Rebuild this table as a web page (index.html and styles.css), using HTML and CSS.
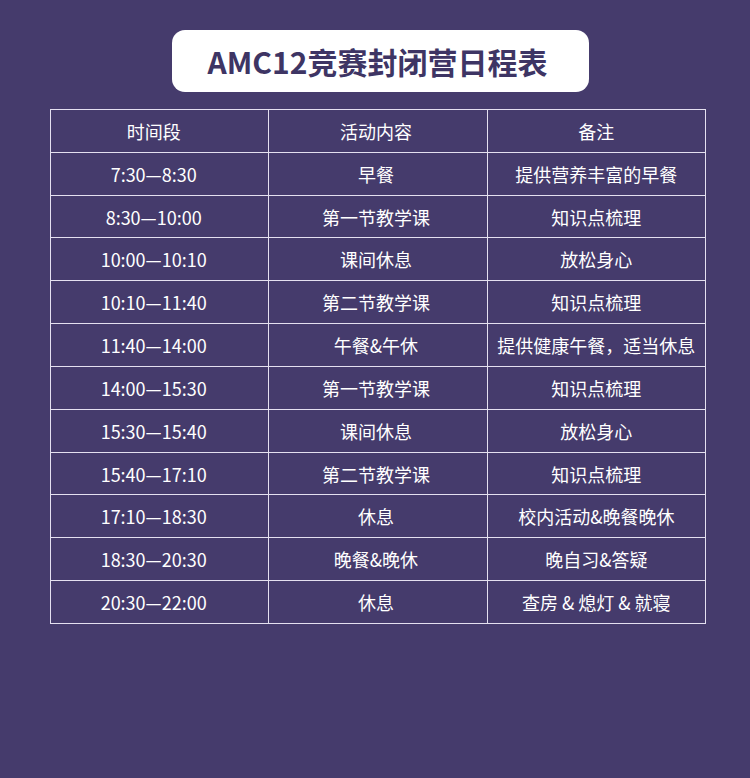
FILE: index.html
```html
<!DOCTYPE html>
<html lang="zh">
<head>
<meta charset="utf-8">
<link rel="stylesheet" href="styles.css">
</head>
<body>
<div class="page">
  <div class="title"><span>AMC12竞赛封闭营日程表</span></div>
  <table class="schedule">
    <tr><td>时间段</td><td>活动内容</td><td>备注</td></tr>
    <tr><td>7:30—8:30</td><td>早餐</td><td>提供营养丰富的早餐</td></tr>
    <tr><td>8:30—10:00</td><td>第一节教学课</td><td>知识点梳理</td></tr>
    <tr><td>10:00—10:10</td><td>课间休息</td><td>放松身心</td></tr>
    <tr><td>10:10—11:40</td><td>第二节教学课</td><td>知识点梳理</td></tr>
    <tr><td>11:40—14:00</td><td>午餐&amp;午休</td><td>提供健康午餐，适当休息</td></tr>
    <tr><td>14:00—15:30</td><td>第一节教学课</td><td>知识点梳理</td></tr>
    <tr><td>15:30—15:40</td><td>课间休息</td><td>放松身心</td></tr>
    <tr><td>15:40—17:10</td><td>第二节教学课</td><td>知识点梳理</td></tr>
    <tr><td>17:10—18:30</td><td>休息</td><td>校内活动&amp;晚餐晚休</td></tr>
    <tr><td>18:30—20:30</td><td>晚餐&amp;晚休</td><td>晚自习&amp;答疑</td></tr>
    <tr><td>20:30—22:00</td><td>休息</td><td>查房 &amp; 熄灯 &amp; 就寝</td></tr>
  </table>
</div>
</body>
</html>
```

FILE: styles.css
```css
html, body {
  margin: 0;
  padding: 0;
  background: #453b6c;
}
.page {
  width: 750px;
  height: 778px;
  padding-top: 30px;
  box-sizing: border-box;
  font-family: "Noto Sans CJK SC", "Noto Sans", sans-serif;
}
.title {
  margin-left: 172px;
  width: 417px;
  height: 62px;
  background: #ffffff;
  border-radius: 13px;
  display: flex;
  align-items: center;
  justify-content: center;
}
.title span {
  color: #3e3564;
  font-size: 30px;
  font-weight: 700;
  letter-spacing: 0;
  margin-left: -6px;
}
.schedule {
  margin-top: 17px;
  margin-left: 50px;
  width: 656px;
  height: 515px;
  border-collapse: collapse;
  table-layout: fixed;
}
.schedule td {
  border: 1px solid #e4e0f0;
  color: #ffffff;
  font-size: 18px;
  text-align: center;
  vertical-align: middle;
  padding: 0;
  height: 41px;
}
.schedule td:first-child {
  padding-right: 12px;
}
.schedule td:nth-child(2) {
  padding-right: 4px;
}
```
